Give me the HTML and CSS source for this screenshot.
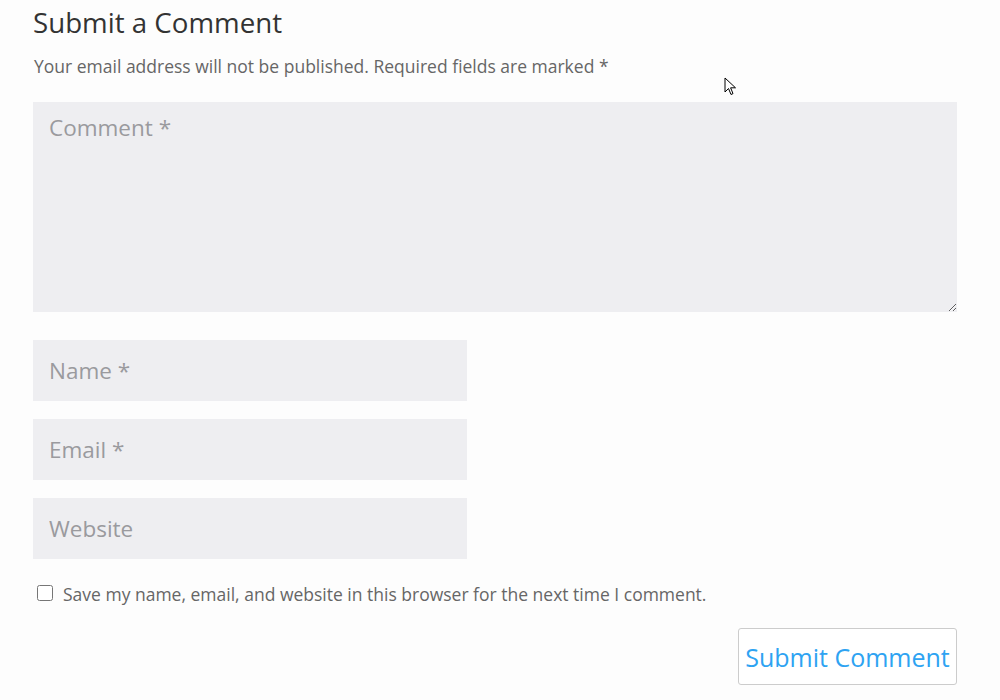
FILE: index.html
```html
<!DOCTYPE html>
<html>
<head>
<meta charset="utf-8">
<link rel="stylesheet" href="styles.css">
</head>
<body>
<div class="page">
  <h3 class="title">Submit a Comment</h3>
  <p class="notes">Your email address will not be published. Required fields are marked *</p>
  <form class="form">
    <textarea class="comment" placeholder="Comment *"></textarea>
    <input class="field" type="text" placeholder="Name *">
    <input class="field" type="text" placeholder="Email *">
    <input class="field" type="text" placeholder="Website">
    <label class="consent"><input type="checkbox" class="check"><span>Save my name, email, and website in this browser for the next time I comment.</span></label>
    <div class="actions"><button type="button" class="submit">Submit Comment</button></div>
  </form>
</div>
<svg class="cursor" width="14" height="20" viewBox="0 0 14 20"><path d="M1 1 L1 15 L4.5 11.5 L7 17.5 L9 16.6 L6.6 10.8 L11.5 10.8 Z" fill="#fff" stroke="#000" stroke-width="1"/></svg>
</body>
</html>
```
FILE: styles.css
```css
html, body { margin: 0; padding: 0; }
body {
  background: #fdfdfd;
  font-family: "Open Sans", sans-serif;
  width: 1000px;
  height: 700px;
  overflow: hidden;
  position: relative;
}
.page { padding: 0 43px 0 33px; }
.title {
  margin: 0;
  padding-top: 3px;
  font-size: 27.7px;
  font-weight: 400;
  color: #333;
  line-height: 38px;
}
.notes {
  margin: 12px 0 0 1px;
  font-size: 17.5px;
  color: #666;
  line-height: 26px;
}
.form { display: flex; flex-direction: column; margin-top: 23px; }
.comment, .field {
  box-sizing: border-box;
  background: #eeeef1;
  border: none;
  font-family: "Open Sans", sans-serif;
  font-size: 22.5px;
  color: #666;
  outline: none;
}
.comment::placeholder, .field::placeholder { color: #9a9a9e; }
.comment {
  width: 924px;
  height: 210px;
  padding: 10px 16px;
  resize: vertical;
  line-height: 32px;
}
.field {
  width: 434px;
  height: 61px;
  padding: 0 16px;
  margin-top: 28px;
}
.field + .field { margin-top: 18px; }
.consent {
  display: flex;
  align-items: center;
  gap: 10px;
  margin-top: 23px;
  font-size: 17.5px;
  color: #666;
  line-height: 24px;
}
.check { margin: 0 0 2px 4px; width: 16px; height: 16px; }
.actions { display: flex; justify-content: flex-end; margin-top: 22px; }
.submit {
  width: 219px;
  height: 57px;
  background: #fff;
  border: 1px solid #ccc;
  border-radius: 3px;
  color: #2ea3f2;
  font-family: "Open Sans", sans-serif;
  font-size: 25px;
  padding: 0;
}
.cursor { position: absolute; left: 724px; top: 77px; }
```
